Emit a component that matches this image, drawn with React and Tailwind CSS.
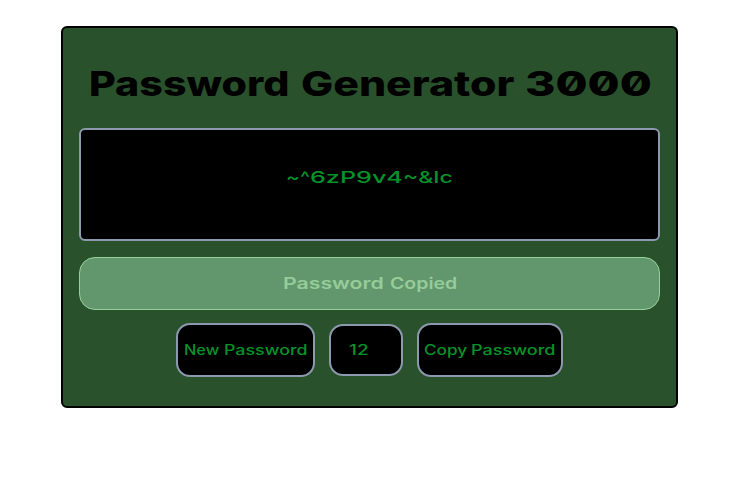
import { useLayoutEffect, useRef, useState } from 'react';

// Stretches a word horizontally so that it fills its box like an extended typeface.
function Wide({ children, className }) {
  const box = useRef(null);
  const text = useRef(null);
  const [scale, setScale] = useState(1);
  useLayoutEffect(() => {
    setScale(box.current.clientWidth / text.current.offsetWidth);
  }, [children]);
  return (
    <span ref={box} className={`block shrink-0 text-left whitespace-nowrap ${className}`}>
      <span ref={text} className="inline-block origin-left" style={{ transform: `scaleX(${scale})` }}>
        {children}
      </span>
    </span>
  );
}

export default function App() {
  return (
    <div className="min-h-[499px] bg-white pt-[26px] pl-[61px] font-['Inter',sans-serif]">
      <main className="flex h-[382px] w-[617px] flex-col rounded-md border-2 border-black bg-[#29522c] px-4">
        <h1 className="flex h-[100px] pt-[36px] pl-[9px] text-[34px] leading-[40px] font-extrabold text-black">
          <Wide className="ml-px w-[201px]">Password</Wide>
          <Wide className="ml-[11px] w-[214px]">Generator</Wide>
          <Wide className="ml-[10px] w-[127px] slashed-zero">3000</Wide>
        </h1>
        <div className="flex h-[113px] shrink-0 justify-center rounded-md border-2 border-[#8d99ae] bg-black pt-[35px] text-[16.5px] leading-6 font-medium text-[#04932a]">
          <Wide className="w-[24px]">~^</Wide>
          <Wide className="w-[93px]">6zP9v4</Wide>
          <Wide className="w-[50px]">~&amp;Ic</Wide>
        </div>
        <div className="mt-4 flex h-[53px] shrink-0 justify-center gap-[6px] rounded-2xl border border-[#98d09c] bg-[#62966c] pt-[13px] text-[16px] leading-6 font-semibold text-[#96cc9a]">
          <Wide className="w-[101px]">Password</Wide>
          <Wide className="w-[67px]">Copied</Wide>
        </div>
        <div className="mt-[13px] flex items-center justify-center gap-[14px] text-[14px] leading-5 font-medium text-[#04932a]">
          <button className="flex h-[54px] w-[139px] items-center justify-center gap-[5px] rounded-[14px] border-2 border-[#8d99ae] bg-black pb-px">
            <Wide className="w-[35px]">New</Wide>
            <Wide className="w-[84px]">Password</Wide>
          </button>
          <div className="flex h-[52px] w-[74px] items-center rounded-[14px] border-2 border-[#8d99ae] bg-black pb-px pl-[18px]">
            <Wide className="w-[19px]">12</Wide>
          </div>
          <button className="flex h-[54px] w-[146px] items-center justify-center gap-[4px] rounded-[14px] border-2 border-[#8d99ae] bg-black pb-px">
            <Wide className="w-[43px]">Copy</Wide>
            <Wide className="w-[85px]">Password</Wide>
          </button>
        </div>
      </main>
    </div>
  );
}
